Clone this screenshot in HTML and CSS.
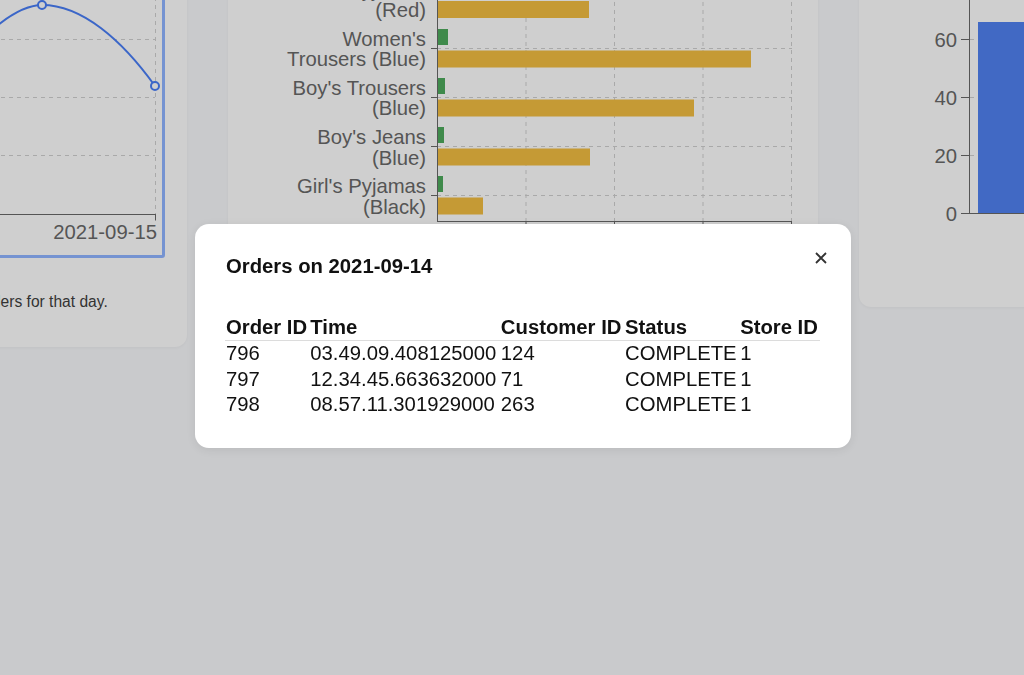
FILE: index.html
```html
<!DOCTYPE html>
<html lang="en">
<head>
<meta charset="utf-8">
<title>Orders dashboard</title>
<link rel="stylesheet" href="styles.css">
</head>
<body>
<div class="dashboard">
  <section class="card card-left">
    <div class="chart-box">
      <svg class="chart-line" width="337" height="290" viewBox="-175 -35 337 290">
        <g class="grid">
          <line x1="-175" y1="-18.5" x2="155" y2="-18.5"/>
          <line x1="-175" y1="39.5" x2="155" y2="39.5"/>
          <line x1="-175" y1="97.5" x2="155" y2="97.5"/>
          <line x1="-175" y1="155.5" x2="155" y2="155.5"/>
          <line x1="155.5" y1="-35" x2="155.5" y2="214"/>
        </g>
        <g class="axis">
          <line x1="-175" y1="214.5" x2="156" y2="214.5"/>
          <line x1="155.5" y1="214" x2="155.5" y2="220.5"/>
        </g>
        <text class="tick-label" x="157" y="239" text-anchor="end">2021-09-15</text>
        <path class="series" d="M-71 96 C-40 62 5 5 42 5 C 82 5 122 40 155 86"/>
        <circle class="dot" cx="42" cy="5" r="4"/>
        <circle class="dot" cx="155" cy="86" r="4"/>
      </svg>
    </div>
    <p class="caption">Click a point to see all orders for that day.</p>
  </section>

  <section class="card card-mid">
    <svg class="chart-bars" width="546" height="300" viewBox="250 -38 546 300">
      <g class="grid">
        <line x1="526" y1="-38" x2="526" y2="221"/>
        <line x1="614.5" y1="-38" x2="614.5" y2="221"/>
        <line x1="703" y1="-38" x2="703" y2="221"/>
        <line x1="791.5" y1="-38" x2="791.5" y2="221"/>
        <line x1="437" y1="-0.5" x2="792" y2="-0.5"/>
        <line x1="437" y1="48.5" x2="792" y2="48.5"/>
        <line x1="437" y1="97.5" x2="792" y2="97.5"/>
        <line x1="437" y1="146.5" x2="792" y2="146.5"/>
        <line x1="437" y1="195.5" x2="792" y2="195.5"/>
      </g>
      <g class="bars">
        <rect class="bar-gold" x="437" y="1" width="152" height="17"/>
        <rect class="bar-green" x="437" y="29" width="11" height="16"/>
        <rect class="bar-gold" x="437" y="50.5" width="314" height="17"/>
        <rect class="bar-green" x="437" y="78" width="8" height="16"/>
        <rect class="bar-gold" x="437" y="99.5" width="257" height="17"/>
        <rect class="bar-green" x="437" y="127" width="7" height="16"/>
        <rect class="bar-gold" x="437" y="148.5" width="153" height="17"/>
        <rect class="bar-green" x="437" y="176" width="6" height="16"/>
        <rect class="bar-gold" x="437" y="197.5" width="46" height="17"/>
      </g>
      <g class="axis">
        <line x1="437.5" y1="-38" x2="437.5" y2="222"/>
        <line x1="437" y1="221.5" x2="792" y2="221.5"/>
        <line x1="526" y1="221" x2="526" y2="228"/>
        <line x1="614.5" y1="221" x2="614.5" y2="228"/>
        <line x1="703" y1="221" x2="703" y2="228"/>
        <line x1="791.5" y1="221" x2="791.5" y2="228"/>
        <line x1="431" y1="-0.5" x2="437" y2="-0.5"/>
        <line x1="431" y1="48.5" x2="437" y2="48.5"/>
        <line x1="431" y1="97.5" x2="437" y2="97.5"/>
        <line x1="431" y1="146.5" x2="437" y2="146.5"/>
        <line x1="431" y1="195.5" x2="437" y2="195.5"/>
      </g>
      <g class="tick-label" text-anchor="end">
        <text x="426" y="-3">Men's Pyjamas</text>
        <text x="426" y="17">(Red)</text>
        <text x="426" y="46">Women's</text>
        <text x="426" y="66">Trousers (Blue)</text>
        <text x="426" y="95">Boy's Trousers</text>
        <text x="426" y="115">(Blue)</text>
        <text x="426" y="144">Boy's Jeans</text>
        <text x="426" y="165">(Blue)</text>
        <text x="426" y="193">Girl's Pyjamas</text>
        <text x="426" y="214">(Black)</text>
      </g>
    </svg>
  </section>

  <section class="card card-right">
    <svg class="chart-col" width="256" height="323" viewBox="881 -38 256 323">
      <g class="grid">
        <line x1="970" y1="-18.5" x2="1137" y2="-18.5"/>
        <line x1="970" y1="39.5" x2="1137" y2="39.5"/>
        <line x1="970" y1="97.5" x2="1137" y2="97.5"/>
        <line x1="970" y1="155.5" x2="1137" y2="155.5"/>
      </g>
      <rect class="bar-blue" x="978" y="22" width="159" height="191.5"/>
      <g class="axis">
        <line x1="969.5" y1="-38" x2="969.5" y2="214"/>
        <line x1="961" y1="213.5" x2="1137" y2="213.5"/>
        <line x1="961" y1="155.5" x2="969" y2="155.5"/>
        <line x1="961" y1="97.5" x2="969" y2="97.5"/>
        <line x1="961" y1="39.5" x2="969" y2="39.5"/>
        <line x1="961" y1="-18.5" x2="969" y2="-18.5"/>
      </g>
      <g class="tick-label" text-anchor="end">
        <text x="957" y="-11.5">80</text>
        <text x="957" y="46.5">60</text>
        <text x="957" y="104.5">40</text>
        <text x="957" y="162.5">20</text>
        <text x="957" y="220.5">0</text>
      </g>
    </svg>
  </section>
</div>

<div class="modal" role="dialog" aria-labelledby="modal-title">
  <h2 class="modal-title" id="modal-title">Orders on 2021-09-14</h2>
  <button class="modal-close" type="button" aria-label="Close">
    <svg width="12" height="12" viewBox="0 0 12 12"><path d="M1 1 L11 11 M11 1 L1 11"/></svg>
  </button>
  <table class="orders">
    <thead>
      <tr><th>Order ID</th><th>Time</th><th>Customer ID</th><th>Status</th><th>Store ID</th></tr>
    </thead>
    <tbody>
      <tr><td>796</td><td>03.49.09.408125000</td><td>124</td><td>COMPLETE</td><td>1</td></tr>
      <tr><td>797</td><td>12.34.45.663632000</td><td>71</td><td>COMPLETE</td><td>1</td></tr>
      <tr><td>798</td><td>08.57.11.301929000</td><td>263</td><td>COMPLETE</td><td>1</td></tr>
    </tbody>
  </table>
</div>
</body>
</html>
```

FILE: styles.css
```css
* { box-sizing: border-box; }

html, body {
  margin: 0;
  padding: 0;
  height: 100%;
}

body {
  background: #c9cacc;
  font-family: "Liberation Sans", Arial, sans-serif;
  color: #111;
  overflow: hidden;
}

.dashboard {
  display: flex;
  align-items: flex-start;
  gap: 41px;
  margin-left: -200px;
  margin-top: -60px;
}

.card {
  flex: none;
  background: #cfcfcf;
  border-radius: 12px;
  padding: 22px;
  box-shadow: 0 1px 3px rgba(0, 0, 0, 0.04);
}

.card-left {
  width: 387px;
  padding-bottom: 36px;
}

.card-mid { width: 590px; }

.card-right { width: 300px; }

.chart-box {
  border: 3px solid #7593d1;
  border-radius: 3px;
}

svg { display: block; }

.grid line {
  stroke: #a9a9a9;
  stroke-width: 1;
  stroke-dasharray: 4 4;
}

.axis line {
  stroke: #555;
  stroke-width: 1;
}

.tick-label,
.tick-label text {
  font-family: "Liberation Sans", Arial, sans-serif;
  font-size: 20.3px;
  fill: #555;
}

.series {
  fill: none;
  stroke: #3b66c8;
  stroke-width: 2;
}

.dot {
  fill: #cfcfcf;
  stroke: #3b66c8;
  stroke-width: 2;
}

.bar-gold { fill: #c59a35; }
.bar-green { fill: #3f8a4b; }
.bar-blue { fill: #4169c4; }

.caption {
  margin: 35px 0 0;
  font-size: 15.6px;
  line-height: 18px;
  color: #333;
  white-space: nowrap;
}

.modal {
  position: fixed;
  left: 195px;
  top: 224px;
  width: 656px;
  padding: 30px 30px 30px 31px;
  background: #fff;
  border-radius: 14px;
  box-shadow: 0 2px 10px rgba(0, 0, 0, 0.08);
}

.modal-title {
  margin: 0 0 36px;
  font-size: 20.3px;
  line-height: 24px;
  font-weight: bold;
  color: #111;
}

.modal-close {
  position: absolute;
  top: 22px;
  right: 18px;
  width: 24px;
  height: 24px;
  padding: 0;
  border: 0;
  background: none;
  display: flex;
  align-items: center;
  justify-content: center;
  cursor: pointer;
}

.modal-close path {
  stroke: #333;
  stroke-width: 1.8;
  fill: none;
}

.orders {
  width: 100%;
  margin-left: -1px;
  border-collapse: collapse;
  font-size: 20.3px;
  color: #111;
}

.orders th,
.orders td {
  padding: 0 1px;
  text-align: left;
  white-space: nowrap;
}

.orders th {
  font-weight: bold;
  line-height: 26px;
  border-bottom: 1px solid #dcdcdc;
}

.orders td {
  line-height: 25.5px;
}
```
